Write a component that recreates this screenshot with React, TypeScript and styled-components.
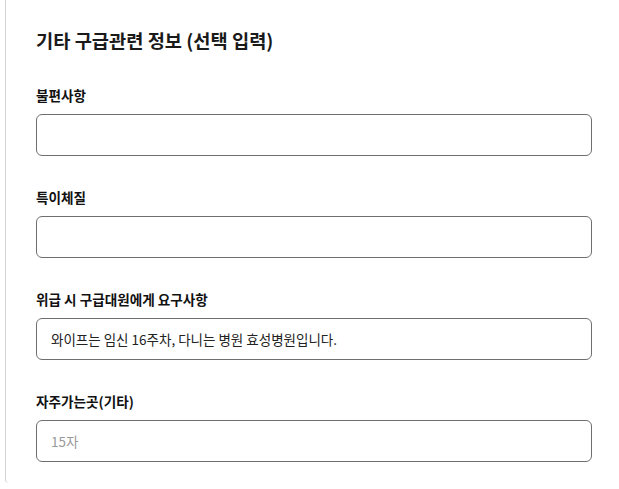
import styled, { createGlobalStyle } from "styled-components";

const GlobalStyle = createGlobalStyle`
  html, body {
    margin: 0;
    padding: 0;
    background: #ffffff;
  }
  body {
    font-family: "Noto Sans CJK KR", "Noto Sans", sans-serif;
    color: #1a1a1a;
  }
`;

const Card = styled.section`
  margin-left: 5px;
  height: 483px;
  box-sizing: border-box;
  border-left: 1px solid #d4d4d4;
  border-bottom-left-radius: 4px;
  padding: 28px 27px 0 30px;
  display: flex;
  flex-direction: column;
`;

const Title = styled.h2`
  margin: 0 0 34px;
  font-size: 18.7px;
  line-height: 24px;
  font-weight: 700;
  color: #1a1a1a;
`;

const Field = styled.div`
  display: flex;
  flex-direction: column;
  gap: 10px;
  margin-bottom: 32px;
`;

const Label = styled.label`
  font-size: 13.6px;
  line-height: 18px;
  font-weight: 700;
  color: #111;
`;

const Input = styled.input`
  box-sizing: border-box;
  width: 556px;
  height: 42px;
  padding: 0 14px;
  border: 1px solid #6f6f6f;
  border-radius: 6px;
  font-family: inherit;
  font-size: 13.5px;
  color: #222;
  background: #fff;
  outline: none;

  &::placeholder {
    color: #9a9a9a;
  }
`;

const fields = [
  { label: "불편사항", value: "", placeholder: "" },
  { label: "특이체질", value: "", placeholder: "" },
  {
    label: "위급 시 구급대원에게 요구사항",
    value: "와이프는 임신 16주차, 다니는 병원 효성병원입니다.",
    placeholder: "",
  },
  { label: "자주가는곳(기타)", value: "", placeholder: "15자" },
];

export default function App() {
  return (
    <>
      <GlobalStyle />
      <Card>
        <Title>기타 구급관련 정보 (선택 입력)</Title>
        {fields.map((f) => (
          <Field key={f.label}>
            <Label>{f.label}</Label>
            <Input defaultValue={f.value} placeholder={f.placeholder} />
          </Field>
        ))}
      </Card>
    </>
  );
}
